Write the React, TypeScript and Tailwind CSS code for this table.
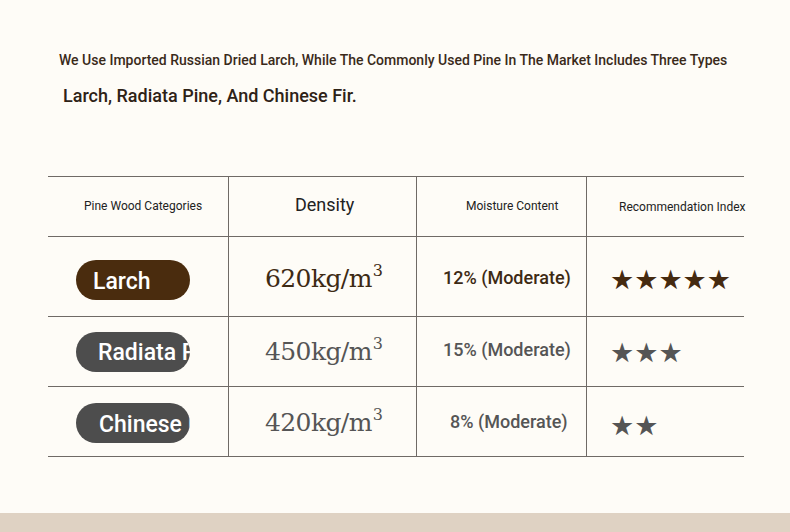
import { Fragment } from 'react'

interface Row {
  name: string
  density: string
  moisture: string
  stars: number
  primary: boolean
  height: string
  cellPad: string
  pillPad: string
  starPad: string
  namePad: string
  moisturePad: string
}

const rows: Row[] = [
  { name: 'Larch', density: '620', moisture: '12% (Moderate)', stars: 5, primary: true, height: 'h-[80px]', cellPad: 'pt-[5px]', pillPad: 'pt-[7px]', starPad: 'pt-[8px]', namePad: 'pl-[17px]', moisturePad: 'pl-[26px]' },
  { name: 'Radiata Pine', density: '450', moisture: '15% (Moderate)', stars: 3, primary: false, height: 'h-[70px]', cellPad: 'pt-[0px]', pillPad: 'pt-[0px]', starPad: 'pt-[3px]', namePad: 'pl-[22px]', moisturePad: 'pl-[26px]' },
  { name: 'Chinese Fir', density: '420', moisture: '8% (Moderate)', stars: 2, primary: false, height: 'h-[70px]', cellPad: 'pt-[3px]', pillPad: 'pt-[3px]', starPad: 'pt-[9px]', namePad: 'pl-[23px]', moisturePad: 'pl-[33px]' }
]

export default function App() {
  return (
    <div className="w-[790px] h-[532px] bg-[#fefcf7] font-['Roboto',sans-serif] flex flex-col overflow-hidden">
      <div className="h-[513px] pt-[51px]">
        {/* Intro text */}
        <p className="pl-[59px] text-[14px] leading-[18px] text-[#3a2a1a] font-medium">
          We Use Imported Russian Dried Larch, While The Commonly Used Pine In The Market Includes Three Types
        </p>
        <p className="pl-[63px] mt-[15px] text-[18px] leading-[24px] text-[#2e2216] font-medium">
          Larch, Radiata Pine, And Chinese Fir.
        </p>

        {/* Comparison table */}
        <div className="ml-[48px] mt-[68px] w-[696px] grid grid-cols-[180px_188px_170px_158px] border-b border-[#6f6a66]">
          <div className="h-[60px] border-t border-[#6f6a66] flex items-center pl-[36px] pb-[2px] text-[12px] text-[#222]">
            Pine Wood Categories
          </div>
          <div className="h-[60px] border-t border-l border-[#6f6a66] flex items-center pl-[66px] pb-[4px] text-[18px] text-[#222]">
            Density
          </div>
          <div className="h-[60px] border-t border-l border-[#6f6a66] flex items-center pl-[49px] pb-[2px] text-[12px] text-[#222]">
            Moisture Content
          </div>
          <div className="h-[60px] border-t border-l border-[#6f6a66] flex items-center pl-[32px] text-[12px] text-[#222] whitespace-nowrap">
            Recommendation Index
          </div>

          {rows.map((r) => {
            const tone = r.primary ? 'text-[#3d2a14]' : 'text-[#555]'
            return (
              <Fragment key={r.name}>
                <div className={`${r.height} ${r.pillPad} border-t border-[#6f6a66] flex items-center pl-[28px]`}>
                  <div
                    className={`w-[114px] h-[40px] rounded-full overflow-hidden flex items-center pt-[4px] whitespace-nowrap text-[23px] font-medium text-white ${r.namePad} ${r.primary ? 'bg-[#4a2c0e]' : 'bg-[#4d4d4d]'}`}
                  >
                    {r.name}
                  </div>
                </div>
                <div className={`${r.height} ${r.cellPad} border-t border-l border-[#6f6a66] flex items-center pl-[36px] font-['DejaVu_Serif',serif] text-[25px] tracking-[-0.6px] ${tone}`}>
                  {r.density}kg/m<sup className="text-[16px] -top-[0.5em] ml-[1px]">3</sup>
                </div>
                <div className={`${r.height} ${r.cellPad} border-t border-l border-[#6f6a66] flex items-center pb-[4px] ${r.moisturePad} text-[18px] font-medium ${tone}`}>
                  {r.moisture}
                </div>
                <div className={`${r.height} ${r.starPad} border-t border-l border-[#6f6a66] flex items-center pl-[23px] text-[27px] font-['DejaVu_Sans',sans-serif] ${r.primary ? 'text-[#452a10]' : 'text-[#555]'}`}>
                  {'★'.repeat(r.stars)}
                </div>
              </Fragment>
            )
          })}
        </div>
      </div>
      <div className="flex-1 bg-[#dfd2c3]" />
    </div>
  )
}
